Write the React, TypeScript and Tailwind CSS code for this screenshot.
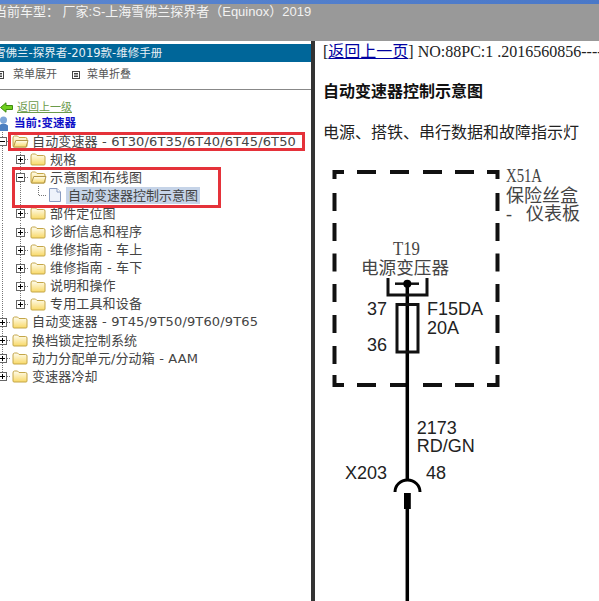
const cjk = "font-['Liberation_Sans','Noto_Sans_CJK_SC',sans-serif]";
const tree = "font-['DejaVu_Sans','Noto_Sans_CJK_SC',sans-serif]";
const serif = "font-['Liberation_Serif','Noto_Sans_CJK_SC',serif]";

type Row = {
  label: string;
  level: number;
  kind: "plus" | "minus" | "doc";
  open?: boolean;
  selected?: boolean;
  lastChild?: boolean;
};

const rows: Row[] = [
  { label: "自动变速器 - 6T30/6T35/6T40/6T45/6T50", level: 0, kind: "minus", open: true },
  { label: "规格", level: 1, kind: "plus" },
  { label: "示意图和布线图", level: 1, kind: "minus", open: true },
  { label: "自动变速器控制示意图", level: 2, kind: "doc", selected: true },
  { label: "部件定位图", level: 1, kind: "plus" },
  { label: "诊断信息和程序", level: 1, kind: "plus" },
  { label: "维修指南 - 车上", level: 1, kind: "plus" },
  { label: "维修指南 - 车下", level: 1, kind: "plus" },
  { label: "说明和操作", level: 1, kind: "plus" },
  { label: "专用工具和设备", level: 1, kind: "plus", lastChild: true },
  { label: "自动变速器 - 9T45/9T50/9T60/9T65", level: 0, kind: "plus" },
  { label: "换档锁定控制系统", level: 0, kind: "plus" },
  { label: "动力分配单元/分动箱 - AAM", level: 0, kind: "plus" },
  { label: "变速器冷却", level: 0, kind: "plus", lastChild: true },
];

function Guide() {
  return (
    <svg width="18" height="18" className="shrink-0">
      <line x1="9.5" y1="0" x2="9.5" y2="18" stroke="#777" strokeDasharray="1 1" />
    </svg>
  );
}

function Expander({ kind, last }: { kind: "plus" | "minus"; last?: boolean }) {
  return (
    <svg width="18" height="18" className="shrink-0">
      <line x1="9.5" y1="0" x2="9.5" y2={last ? 9 : 18} stroke="#777" strokeDasharray="1 1" />
      <line x1="14" y1="9.5" x2="18" y2="9.5" stroke="#777" strokeDasharray="1 1" />
      <rect x="5.5" y="5.5" width="8" height="8" fill="#fff" stroke="#666" />
      <line x1="7" y1="9.5" x2="12" y2="9.5" stroke="#000" />
      {kind === "plus" && <line x1="9.5" y1="7" x2="9.5" y2="12" stroke="#000" />}
    </svg>
  );
}

function Folder({ open }: { open?: boolean }) {
  return (
    <svg width="18" height="18" viewBox="0 0 18 18" className="shrink-0">
      <defs>
        <linearGradient id="folder-fill" x1="0" y1="0" x2="0" y2="1">
          <stop offset="0" stopColor="#fffdf0" />
          <stop offset="1" stopColor="#f8d866" />
        </linearGradient>
      </defs>
      <path
        d="M2 6 Q2 4 3.5 4 H6.5 L8 5.5 H14.5 Q16 5.5 16 7 V14 Q16 15 15 15 H3 Q2 15 2 14 Z"
        fill="url(#folder-fill)"
        stroke="#c4a648"
      />
      {open && <path d="M2.5 15 L4.8 8.5 H17 L15 15 Z" fill="url(#folder-fill)" stroke="#b3974a" />}
    </svg>
  );
}

function Doc() {
  return (
    <svg width="14" height="16" viewBox="0 0 14 16" className="shrink-0">
      <path d="M1.5 1.5 H9 L12.5 5 V14.5 H1.5 Z" fill="#eef3fb" stroke="#8a9cc0" />
      <path d="M9 1.5 V5 H12.5" fill="#fff" stroke="#8a9cc0" />
    </svg>
  );
}

function MenuIcon() {
  return (
    <svg width="8" height="8" className="shrink-0">
      <rect x="0.5" y="0.5" width="7" height="7" fill="none" stroke="#444" />
      <path d="M2 2.5 H6 M2 4 H6 M2 5.5 H6" stroke="#444" />
    </svg>
  );
}

function TreeRow({ row }: { row: Row }) {
  return (
    <div className="flex h-[18.1px] items-center -ml-[7px]">
      {row.level >= 1 && <Guide />}
      {row.level === 2 && (
        <>
          <Guide />
          <svg width="18" height="18" className="shrink-0">
            <path d="M9.5 0 V9.5 H18" fill="none" stroke="#777" strokeDasharray="1 1" />
          </svg>
          <div className="ml-[1px] flex h-[18px] w-[18px] shrink-0 items-center">
            <Doc />
          </div>
        </>
      )}
      {row.level < 2 && <Expander kind={row.kind as "plus" | "minus"} last={row.lastChild} />}
      {row.level < 2 && <Folder open={row.open} />}
      {row.selected ? (
        <span className={`whitespace-nowrap bg-[#c6d4e8] px-[2px] text-[13px] leading-[17px] text-[#444] ${tree}`}>
          {row.label}
        </span>
      ) : (
        <span className={`ml-[3px] whitespace-nowrap text-[13px] leading-[17px] tracking-[0.15px] text-[#444] ${tree}`}>
          {row.label}
        </span>
      )}
    </div>
  );
}

function Diagram() {
  const hDash = [37, 70, 103, 135];
  const vDash = [32, 62, 92.5, 123, 154, 185];
  return (
    <svg width="279" height="441" viewBox="0 0 279 441" className="block">
      <g stroke="#111" strokeWidth="4" fill="none">
        <path d="M24 11 H14.5 V18" />
        <path d="M167 11 H177.5 V18" />
        <path d="M14.5 214 V224 H24" />
        <path d="M177.5 214 V224 H167" />
        {hDash.map((x) => (
          <g key={x}>
            <line x1={x} y1="11" x2={x + 19} y2="11" />
            <line x1={x} y1="224" x2={x + 19} y2="224" />
          </g>
        ))}
        {vDash.map((y) => (
          <g key={y}>
            <line x1="14.5" y1={y} x2="14.5" y2={y + 18} />
            <line x1="177.5" y1={y} x2="177.5" y2={y + 18} />
          </g>
        ))}
      </g>
      <line x1="87.3" y1="122" x2="87.3" y2="320" stroke="#000" strokeWidth="3.5" />
      <line x1="87.3" y1="346" x2="87.3" y2="441" stroke="#000" strokeWidth="3.5" />
      <path d="M68 117 V134 H107 V117" fill="none" stroke="#111" strokeWidth="3" />
      <line x1="75" y1="122.7" x2="99" y2="122.7" stroke="#111" strokeWidth="2.5" />
      <circle cx="87.3" cy="122.7" r="4" fill="#000" />
      <rect x="77" y="143.5" width="21" height="47.5" fill="none" stroke="#111" strokeWidth="3" />
      <path d="M75 331 A12.5 12 0 0 1 100 331" fill="none" stroke="#000" strokeWidth="3" />
      <rect x="84" y="332" width="6.8" height="16" fill="#000" />
      <g fontFamily="'Liberation Serif','Noto Sans CJK SC',serif" fill="#444" fontSize="18">
        <text x="186" y="21" textLength="36" lengthAdjust="spacingAndGlyphs">X51A</text>
        <text x="186" y="41">保险丝盒</text>
        <text x="186" y="59">-</text>
        <text x="206" y="59">仪表板</text>
        <text x="73" y="94" textLength="27" lengthAdjust="spacingAndGlyphs">T19</text>
        <text x="41" y="113" fontSize="17.6">电源变压器</text>
      </g>
      <g fontFamily="'Liberation Sans',sans-serif" fill="#222" fontSize="18">
        <text x="47" y="154">37</text>
        <text x="107" y="154">F15DA</text>
        <text x="107" y="172.7">20A</text>
        <text x="47" y="190">36</text>
        <text x="96.7" y="272.7">2173</text>
        <text x="96.7" y="291">RD/GN</text>
        <text x="25" y="318">X203</text>
        <text x="106" y="318">48</text>
      </g>
    </svg>
  );
}

export default function App() {
  return (
    <div className="relative h-[601px] w-[599px] overflow-hidden bg-white">
      <div className="h-[41px] bg-[#999999]">
        <div className="h-[4px] bg-gradient-to-r from-[#5b86d0] to-[#4a78c8]" />
        <div className={`-ml-[6px] whitespace-nowrap text-[13px] leading-[16px] text-[#f2f2f2] ${cjk}`}>
          当前车型： 厂家:S-上海雪佛兰探界者（Equinox）2019
        </div>
      </div>

      <div className="flex h-[560px]">
        <div className="w-[311px] shrink-0 overflow-hidden pt-[3px]">
          <div className={`-ml-[6px] h-[18px] whitespace-nowrap bg-[#006699] pr-[6px] text-[11.5px] leading-[18px] text-[#e8f0f5] ${tree}`}>
            雪佛兰-探界者-2019款-维修手册
          </div>
          <div className={`flex h-[28px] items-center border-b border-b-[#888] pb-[1px] text-[11px] text-[#555] ${tree}`}>
            <span className="-ml-[4px] flex items-center gap-[9px]">
              <MenuIcon />
              菜单展开
            </span>
            <span className="ml-[15px] flex items-center gap-[7px]">
              <MenuIcon />
              菜单折叠
            </span>
          </div>
          <div className="mt-[11px] flex h-[13px] items-center">
            <svg width="13" height="11" viewBox="0 0 13 11" className="shrink-0">
              <path d="M0.5 5.5 L6 0.8 V3.5 H12.5 V7.5 H6 V10.2 Z" fill="#6fd01e" stroke="#3f8a10" />
            </svg>
            <span className={`ml-[4px] text-[11px] leading-[13px] text-[#6a9a4a] underline ${tree}`}>返回上一级</span>
          </div>
          <div className="mt-[2px] flex h-[15px] items-center">
            <svg width="9" height="15" viewBox="0 0 9 15" className="shrink-0 -ml-[1px]">
              <circle cx="4.5" cy="4" r="3.5" fill="#7ea6d8" />
              <path d="M0 15 V9.5 Q4.5 5.5 9 9.5 V15 Z" fill="#4d7fc0" />
            </svg>
            <span className={`ml-[6px] text-[11.5px] font-bold leading-[15px] text-[#1010c8] ${tree}`}>当前:变速器</span>
          </div>
          <div className="mt-[1px]">
            {rows.map((row) => (
              <TreeRow key={row.label} row={row} />
            ))}
          </div>
        </div>

        <div className="w-[4px] shrink-0 bg-[#333]" />

        <div className="min-w-0 flex-1 overflow-hidden">
          <div className={`ml-[8px] mt-[1px] whitespace-nowrap text-[16px] leading-[20px] text-[#222] ${serif}`}>
            [<span className="text-[#0000a0] underline">返回上一页</span>] NO:88PC:1 .2016560856------------
          </div>
          <div className={`ml-[8px] mt-[20px] whitespace-nowrap text-[16px] font-bold leading-[20px] text-[#111] ${cjk}`}>
            自动变速器控制示意图
          </div>
          <div className={`ml-[8px] mt-[21px] whitespace-nowrap text-[16px] leading-[20px] text-[#222] ${cjk}`}>
            电源、搭铁、串行数据和故障指示灯
          </div>
          <div className="ml-[5px] mt-[18px]">
            <Diagram />
          </div>
        </div>
      </div>

      <div className="pointer-events-none absolute left-[8px] top-[132px] h-[19px] w-[297px] border-[3px] border-[#e5323a]" />
      <div className="pointer-events-none absolute left-[12px] top-[167px] h-[41px] w-[209px] border-[3px] border-[#e5323a]" />
    </div>
  );
}
